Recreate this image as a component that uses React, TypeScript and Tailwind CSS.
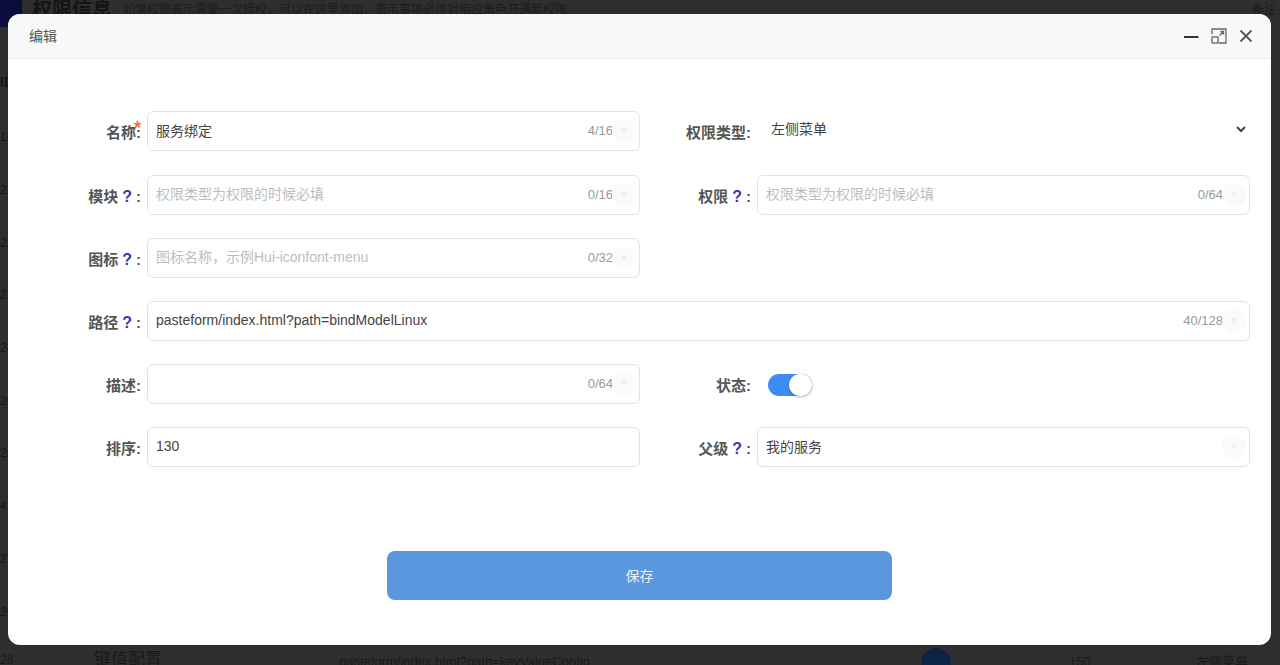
import React from "react";

const font = { fontFamily: '"Liberation Sans", "Noto Sans CJK SC", sans-serif' };

function Label({ text, help, required, w }: { text: string; help?: boolean; required?: boolean; w: string }) {
  return (
    <label className={`${w} relative shrink-0 pt-1 text-right text-[15px] font-bold text-[#555] whitespace-nowrap`}>
      {text}
      {help && <span className="mx-[4px] text-[16px] text-[#3a36ad]">?</span>}
      :
      {required && <span className="absolute right-0 top-[-2px] text-lg leading-[24px] font-bold text-[#e8772e]">*</span>}
    </label>
  );
}

function Field({ value, placeholder, count, clear = true }: { value?: string; placeholder?: string; count?: string; clear?: boolean }) {
  return (
    <div className="relative h-10 min-w-0 flex-1">
      <input
        readOnly
        value={value ?? ""}
        placeholder={placeholder}
        className="h-full w-full rounded-md border border-[#e3e3e3] bg-white pb-[2px] pl-2 pr-24 text-sm text-[#444] outline-none placeholder:text-[#bdbdbd]"
      />
      {count && <span className="absolute right-[27px] top-[10px] text-[13px] leading-[20px] text-[#999]">{count}</span>}
      {clear && (
        <span className="absolute right-[4px] top-[8px] flex h-6 w-6 items-center justify-center rounded-full bg-[#fafafa] text-[10px] leading-none text-[#e6e6e6]">
          ×
        </span>
      )}
    </div>
  );
}

const bgRows = ["16", "21", "22", "23", "24", "25", "26", "41", "27", "29"];

export default function App() {
  return (
    <div className="relative h-[665px] w-[1280px] overflow-hidden bg-[#2e2e2e] text-[#141414]" style={font}>
      <div className="flex h-[27px] items-start">
        <div className="h-[27px] w-[22px] shrink-0 bg-[#0c0c3c]" />
        <h1 className="ml-[10px] text-xl leading-[20px] font-bold text-[#141414]">权限信息</h1>
        <p className="ml-[11px] text-xs leading-[20px] text-[#1c1c1c]">如果权限表示需要一次授权，可以在这里添加，表示事项必须对相应角色开通新权限</p>
        <span className="ml-auto pr-1 text-xs leading-[20px] text-[#1c1c1c]">备注</span>
      </div>
      <div className="pl-0 pt-[44px] text-sm font-bold leading-[22px]">ID</div>
      <div className="mt-[18px] flex flex-col text-xs text-[#161616]">
        {bgRows.map((n, i) => (
          <div key={i} className="flex h-[52.7px] items-center">{n}</div>
        ))}
      </div>
      <div className="flex h-[40px] items-start text-[#1a1a1a]">
        <span className="w-[94px] pt-[14px] text-xs">28</span>
        <span className="w-[245px] pt-[10px] text-[17px] leading-[24px]">键值配置</span>
        <span className="w-[582px] pt-[14px] text-[13px]">pasteform/index.html?path=keyValueConfig</span>
        <span className="mt-[10px] h-[30px] w-[30px] rounded-full bg-[#0c2545]" />
        <span className="ml-[118px] w-[127px] pt-[14px] text-[13px]">150</span>
        <span className="pt-[14px] text-[13px]">左侧菜单</span>
      </div>

      <div className="absolute left-2 top-[14px] flex h-[631px] w-[1263px] flex-col overflow-hidden rounded-xl bg-white">
        <header className="flex h-[45px] shrink-0 items-center justify-between border-b border-[#eeeeee] bg-[#f8f8f8] pl-[21px] pr-[18px]">
          <span className="text-sm text-[#555]">编辑</span>
          <div className="flex items-center">
            <svg width="16" height="16" viewBox="0 0 16 16" className="mr-[11px]">
              <path d="M0 9H14.5" stroke="#333" strokeWidth="2.2" />
            </svg>
            <svg width="16" height="16" viewBox="0 0 16 16" fill="none" stroke="#666" strokeWidth="1.3" className="mr-[12px]">
              <path d="M1 6V1H15V15H8" />
              <path d="M8.5 7.5L12.5 3.5M9.5 3.5H12.5V6.5" />
              <rect x="1" y="9" width="6" height="6" />
            </svg>
            <svg width="14" height="14" viewBox="0 0 14 14" fill="none" stroke="#555" strokeWidth="1.8">
              <path d="M1.5 1.5L12.5 12.5M12.5 1.5L1.5 12.5" />
            </svg>
          </div>
        </header>

        <form className="grid grid-cols-[632px_610px] gap-y-[23.2px] pt-[52.4px]">
          <div className="flex items-center gap-[6px]">
            <Label w="w-[133px]" text="名称" required />
            <Field value="服务绑定" count="4/16" />
          </div>
          <div className="flex items-center gap-[6px]">
            <Label w="w-[111px]" text="权限类型" />
            <div className="h-10 flex-1 pt-[2px]">
              <select className="h-8 w-full rounded-md border border-[#fafafa] bg-white pl-[9px] text-sm text-[#444] outline-none">
                <option>左侧菜单</option>
              </select>
            </div>
          </div>

          <div className="flex items-center gap-[6px]">
            <Label w="w-[133px]" text="模块" help />
            <Field placeholder="权限类型为权限的时候必填" count="0/16" />
          </div>
          <div className="flex items-center gap-[6px]">
            <Label w="w-[111px]" text="权限" help />
            <Field placeholder="权限类型为权限的时候必填" count="0/64" />
          </div>

          <div className="flex items-center gap-[6px]">
            <Label w="w-[133px]" text="图标" help />
            <Field placeholder="图标名称，示例Hui-iconfont-menu" count="0/32" />
          </div>
          <div />

          <div className="col-span-2 flex items-center gap-[6px]">
            <Label w="w-[133px]" text="路径" help />
            <Field value="pasteform/index.html?path=bindModelLinux" count="40/128" />
          </div>

          <div className="flex items-center gap-[6px]">
            <Label w="w-[133px]" text="描述" />
            <Field count="0/64" />
          </div>
          <div className="flex items-center gap-[6px]">
            <Label w="w-[111px]" text="状态" />
            <div className="ml-[11px] mt-[2px] flex h-[22px] w-11 justify-end rounded-full bg-[#3f8cf0]">
              <span className="h-[22px] w-[23px] rounded-full bg-white shadow-[0_1px_3px_rgba(0,0,0,0.3)]" />
            </div>
          </div>

          <div className="flex items-center gap-[6px]">
            <Label w="w-[133px]" text="排序" />
            <Field value="130" clear={false} />
          </div>
          <div className="flex items-center gap-[6px]">
            <Label w="w-[111px]" text="父级" help />
            <Field value="我的服务" />
          </div>
        </form>

        <div className="flex justify-center pt-[84px]">
          <button type="button" className="h-[49px] w-[505px] rounded-lg bg-[#5b97df] pt-[1px] text-sm text-[#e8f1fb]">
            保存
          </button>
        </div>
      </div>
    </div>
  );
}
